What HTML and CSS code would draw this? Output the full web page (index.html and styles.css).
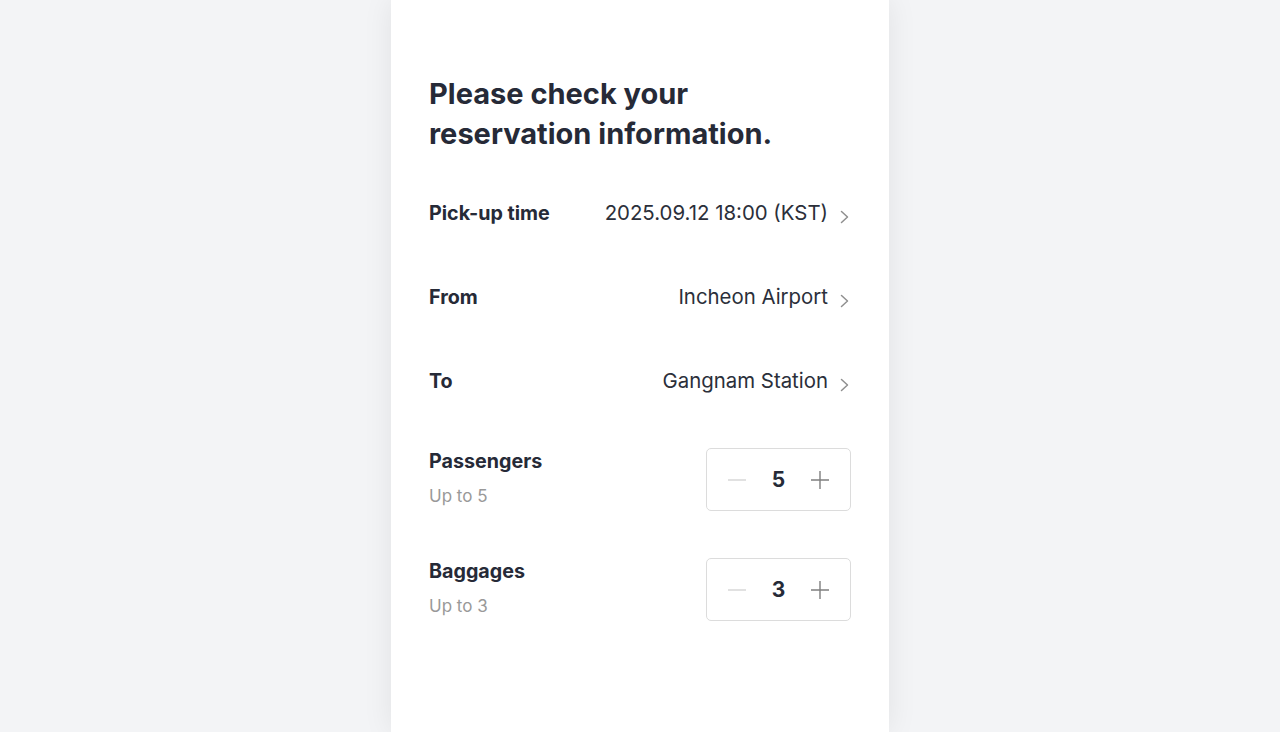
FILE: index.html
```html
<!DOCTYPE html>
<html>
<head>
<meta charset="utf-8">
<link rel="stylesheet" href="styles.css">
</head>
<body>
<div class="page">
  <main class="card">
    <h1 class="title">Please check your<br>reservation information.</h1>
    <div class="rows">
      <div class="row link">
        <span class="label">Pick-up time</span>
        <span class="value">2025.09.12 18:00 (KST)<svg class="chev" width="10" height="14" viewBox="0 0 10 14"><path d="M1.5 1.5 L7.5 7 L1.5 12.5" fill="none" stroke="#8f8f8f" stroke-width="1.5" stroke-linecap="round" stroke-linejoin="round"/></svg></span>
      </div>
      <div class="row link">
        <span class="label">From</span>
        <span class="value">Incheon Airport<svg class="chev" width="10" height="14" viewBox="0 0 10 14"><path d="M1.5 1.5 L7.5 7 L1.5 12.5" fill="none" stroke="#8f8f8f" stroke-width="1.5" stroke-linecap="round" stroke-linejoin="round"/></svg></span>
      </div>
      <div class="row link">
        <span class="label">To</span>
        <span class="value">Gangnam Station<svg class="chev" width="10" height="14" viewBox="0 0 10 14"><path d="M1.5 1.5 L7.5 7 L1.5 12.5" fill="none" stroke="#8f8f8f" stroke-width="1.5" stroke-linecap="round" stroke-linejoin="round"/></svg></span>
      </div>
      <div class="row counter first">
        <div class="texts">
          <span class="label">Passengers</span>
          <span class="sub">Up to 5</span>
        </div>
        <div class="stepper">
          <svg class="btn" width="20" height="20" viewBox="0 0 20 20"><path d="M1 10 H19" stroke="#d4d4d4" stroke-width="1.4"/></svg>
          <span class="num">5</span>
          <svg class="btn" width="20" height="20" viewBox="0 0 20 20"><path d="M1 10 H19 M10 1 V19" stroke="#7f7f7f" stroke-width="1.4"/></svg>
        </div>
      </div>
      <div class="row counter">
        <div class="texts">
          <span class="label">Baggages</span>
          <span class="sub">Up to 3</span>
        </div>
        <div class="stepper">
          <svg class="btn" width="20" height="20" viewBox="0 0 20 20"><path d="M1 10 H19" stroke="#d4d4d4" stroke-width="1.4"/></svg>
          <span class="num">3</span>
          <svg class="btn" width="20" height="20" viewBox="0 0 20 20"><path d="M1 10 H19 M10 1 V19" stroke="#7f7f7f" stroke-width="1.4"/></svg>
        </div>
      </div>
    </div>
  </main>
</div>
</body>
</html>
```
FILE: styles.css
```css
* { box-sizing: border-box; }
html, body { margin: 0; padding: 0; height: 100%; }
body {
  background: #f3f4f6;
  font-family: Inter, Roboto, sans-serif;
  color: #262a37;
  overflow: hidden;
}
.page {
  display: flex;
  justify-content: center;
  height: 100%;
}
.card {
  width: 498px;
  height: 100%;
  background: #fff;
  box-shadow: 0 0 28px rgba(0, 0, 0, 0.08);
  padding: 74px 38px 0 38px;
}
.title {
  margin: 0;
  font-size: 29px;
  line-height: 40px;
  font-weight: 700;
}
.rows {
  display: flex;
  flex-direction: column;
  margin-top: 47px;
}
.row {
  display: flex;
  justify-content: space-between;
}
.row.link {
  align-items: center;
  height: 24px;
  margin-bottom: 60px;
}
.label {
  font-size: 19.7px;
  font-weight: 700;
  line-height: 24px;
}
.value {
  display: flex;
  align-items: center;
  font-size: 20.4px;
  line-height: 24px;
  color: #2b2f3a;
}
.chev {
  margin-left: 12px;
  margin-right: 1px;
  margin-top: 8px;
}
.row.counter {
  align-items: flex-start;
  margin-bottom: 47px;
}
.row.counter.first { margin-top: -5px; }
.texts {
  display: flex;
  flex-direction: column;
  padding-top: 1px;
}
.sub {
  margin-top: 12px;
  font-size: 17px;
  line-height: 22px;
  color: #999;
}
.stepper {
  width: 145px;
  height: 63px;
  border: 1.5px solid #dcdcdc;
  border-radius: 5px;
  display: flex;
  align-items: center;
  justify-content: space-between;
  padding: 0 20px;
}
.num {
  font-size: 21px;
  font-weight: 700;
  line-height: 24px;
}
```
